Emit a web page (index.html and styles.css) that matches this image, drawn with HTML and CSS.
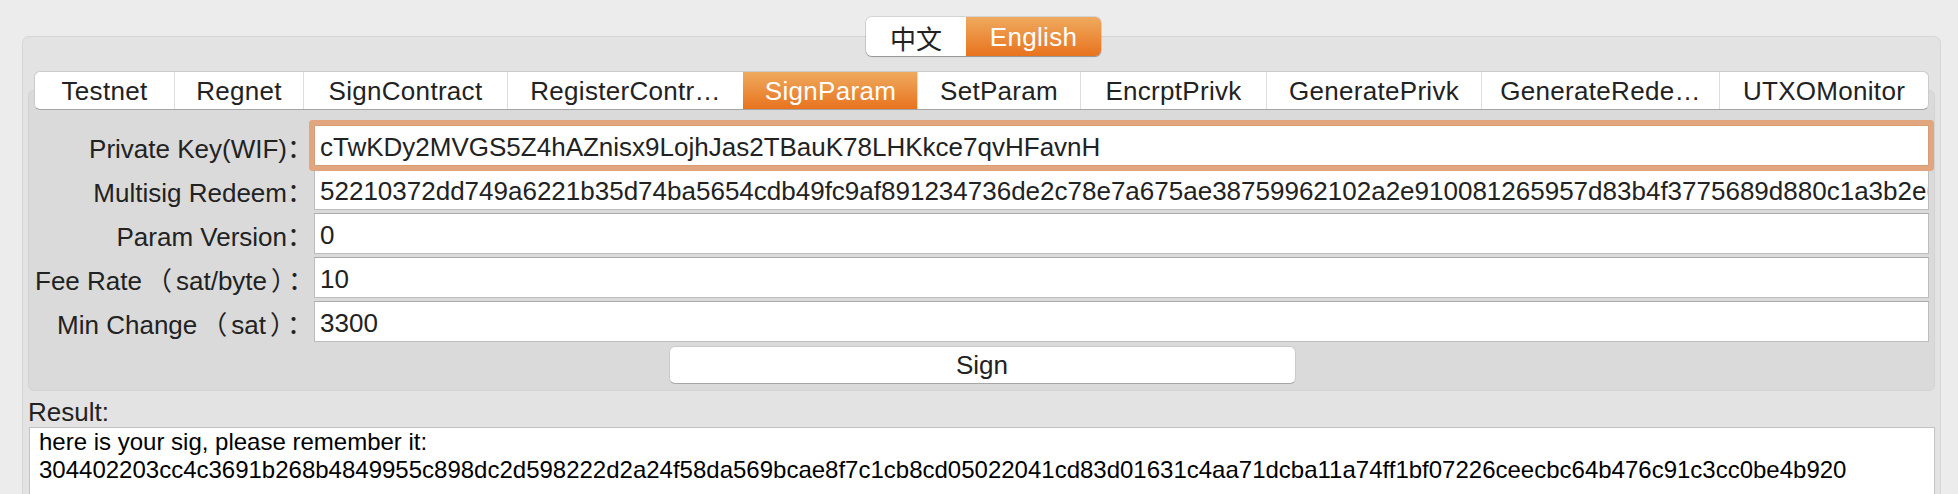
FILE: index.html
```html
<!DOCTYPE html>
<html lang="en">
<head>
<meta charset="utf-8">
<title>SignParam</title>
<link rel="stylesheet" href="styles.css">
</head>
<body>
<div class="app">
  <div class="lang-bar">
    <div class="seg">
      <div class="seg-item zh">中文</div>
      <div class="seg-item en active">English</div>
    </div>
  </div>
  <div class="outer-pane">
    <div class="tab-bar">
      <div class="tab">Testnet</div>
      <div class="tab">Regnet</div>
      <div class="tab">SignContract</div>
      <div class="tab">RegisterContr…</div>
      <div class="tab active">SignParam</div>
      <div class="tab">SetParam</div>
      <div class="tab">EncrptPrivk</div>
      <div class="tab">GeneratePrivk</div>
      <div class="tab">GenerateRede…</div>
      <div class="tab">UTXOMonitor</div>
    </div>
    <div class="inner-pane">
      <div class="form">
        <div class="lbl">Private Key(WIF)：</div>
        <div class="field focus">cTwKDy2MVGS5Z4hAZnisx9LojhJas2TBauK78LHKkce7qvHFavnH</div>
        <div class="lbl">Multisig Redeem：</div>
        <div class="field">52210372dd749a6221b35d74ba5654cdb49fc9af891234736de2c78e7a675ae38759962102a2e910081265957d83b4f3775689d880c1a3b2e6f4d5c7a8b9e0f1d2c3b4a5e6f7d8c9b0a152ae</div>
        <div class="lbl">Param Version：</div>
        <div class="field">0</div>
        <div class="lbl">Fee Rate<span class="fw">（</span>sat/byte<span class="fw">）</span>：</div>
        <div class="field">10</div>
        <div class="lbl">Min Change<span class="fw">（</span>sat<span class="fw">）</span>：</div>
        <div class="field">3300</div>
      </div>
      <div class="btn-row"><button class="btn" type="button">Sign</button></div>
    </div>
    <div class="result-label">Result:</div>
    <div class="result-box">
      <div>here is your sig, please remember it:</div>
      <div>304402203cc4c3691b268b4849955c898dc2d598222d2a24f58da569bcae8f7c1cb8cd05022041cd83d01631c4aa71dcba11a74ff1bf07226ceecbc64b476c91c3cc0be4b920</div>
    </div>
  </div>
</div>
</body>
</html>
```
FILE: styles.css
```css
html, body {
  margin: 0;
  height: 100%;
}
body {
  background: #ececec;
  font-family: "Liberation Sans", "Noto Sans CJK SC", sans-serif;
  color: #222;
  overflow: hidden;
}
.app {
  padding: 17px 17px 0 22px;
}
.lang-bar {
  display: flex;
  justify-content: center;
  position: relative;
  z-index: 2;
  height: 40px;
  padding-left: 4px;
}
.seg {
  display: flex;
  height: 39px;
  border-radius: 6px;
  overflow: hidden;
  box-shadow: 0 0 0 1px rgba(0,0,0,0.10), 0 1px 1px rgba(0,0,0,0.28);
}
.seg-item {
  display: flex;
  align-items: center;
  justify-content: center;
  font-size: 26px;
  padding-top: 1px;
  background: #fff;
}
.seg-item.zh { width: 100px; }
.seg-item.en { width: 135px; letter-spacing: 0.3px; }
.active {
  background: linear-gradient(#efaa5e, #e8731e);
  color: #fff;
}
.outer-pane {
  margin-top: -21px;
  border: 1px solid #d6d6d6;
  border-radius: 7px;
  background: #e3e3e3;
  padding: 34px 5px 0 5px;
  height: 520px;
}
.tab-bar {
  position: relative;
  z-index: 1;
  display: grid;
  grid-template-columns: 139px 129px 204px 236px 174px 163px 186px 215px 238px 1fr;
  box-sizing: border-box;
  height: 39px;
  margin: 0 6px;
  background: #fff;
  border: 1px solid #cbcbcb;
  border-bottom-color: #a4a4a4;
  border-radius: 6px;
  overflow: hidden;
}
.tab {
  display: flex;
  align-items: center;
  justify-content: center;
  font-size: 26px;
  letter-spacing: 0.3px;
  padding-top: 1px;
  white-space: nowrap;
  border-left: 1px solid #dedede;
}
.tab:first-child { border-left: 0; }
.tab.active { border-left-color: transparent; }
.inner-pane {
  margin-top: -20px;
  padding: 34px 5px 6px 6px;
  background: #dadada;
  border: 1px solid #d3d3d3;
  border-radius: 6px;
}
.form {
  display: grid;
  grid-template-columns: 278px 1fr;
  column-gap: 1px;
  row-gap: 3px;
  align-items: center;
}
.lbl {
  text-align: right;
  font-size: 26px;
  padding-top: 2px;
  white-space: nowrap;
}
.fw {
  margin: 0 4px;
}
.field {
  box-sizing: border-box;
  height: 41px;
  background: #fff;
  border: 1px solid #bdbdbd;
  border-top-color: #ababab;
  font-size: 26px;
  line-height: 35px;
  padding: 4px 5px 0;
  overflow: hidden;
  white-space: nowrap;
}
.field.focus {
  position: relative;
  z-index: 1;
  border-color: #d79c72;
  border-radius: 1px;
  box-shadow: 0 0 0 5px #e2a67e;
}
.btn-row {
  display: flex;
  justify-content: center;
  margin-top: 4px;
}
.btn {
  width: 627px;
  height: 38px;
  padding: 1px 0 0;
  background: #fff;
  border: 1px solid #cacaca;
  border-bottom-color: #a6a6a6;
  border-radius: 6px;
  font: 26px "Liberation Sans", sans-serif;
  color: #222;
}
.result-label {
  font-size: 26px;
  line-height: 30px;
  margin-top: 6px;
}
.result-box {
  margin-left: 1px;
  background: #fff;
  border: 1px solid #c3c3c3;
  font-size: 24px;
  line-height: 28px;
  padding: 0 9px;
  height: 120px;
  color: #000;
  white-space: nowrap;
}
```
